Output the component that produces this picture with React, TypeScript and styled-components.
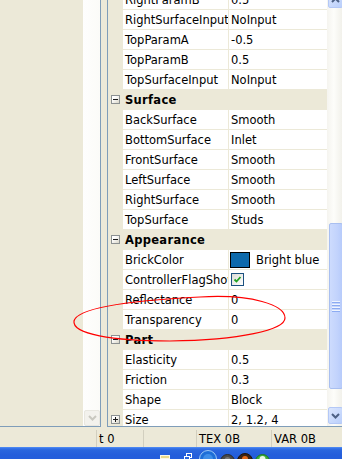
import React from "react";
import styled, { createGlobalStyle } from "styled-components";

const Global = createGlobalStyle`
  *, *::before, *::after { box-sizing: border-box; }
  html, body { margin: 0; padding: 0; background: #ECE9D8; }
  body { font-family: "DejaVu Sans", Tahoma, sans-serif; }
`;

const Screen = styled.div`
  position: relative;
  width: 342px;
  height: 459px;
  overflow: hidden;
  background: #ece9d8;
  display: flex;
  flex-direction: column;
  font-family: "DejaVu Sans", Tahoma, sans-serif;
  font-size: 11.5px;
  letter-spacing: 0;
  color: #000;
`;

const Workspace = styled.div`
  display: flex;
  height: 427px;
  flex: none;
`;

const LeftPanel = styled.div`
  display: flex;
  width: 101px;
  height: 427px;
  flex: none;
  border-right: 1px solid #7f9db9;
  border-bottom: 1px solid #7f9db9;
`;

const LeftBlank = styled.div`
  flex: 1;
  background: #ece9d8;
`;

const DisabledScroll = styled.div`
  width: 17px;
  flex: none;
  background: linear-gradient(to right, #fefefd, #fbfbf8);
  display: flex;
  flex-direction: column;
  justify-content: flex-end;
  padding: 0 0 0 1px;
`;

const DisabledButton = styled.div`
  width: 16px;
  height: 16px;
  border: 1px solid #e8e7e0;
  border-radius: 2px;
  background: #f3f2ed;
  display: flex;
  align-items: center;
  justify-content: center;
`;

const Splitter = styled.div`
  width: 6px;
  flex: none;
  background: #ece9d8;
`;

const GridPanel = styled.div`
  display: flex;
  width: 239px;
  height: 427px;
  flex: none;
  border-left: 1px solid #7f9db9;
  border-bottom: 1px solid #7f9db9;
  border-right: 1px solid #7f9db9;
`;

const RowsArea = styled.div`
  width: 219px;
  flex: none;
  height: 426px;
  overflow: hidden;
  background: #fff;
`;

const RowList = styled.div`
  margin-top: -10px;
  display: flex;
  flex-direction: column;
`;

const Row = styled.div<{ $category?: boolean }>`
  display: flex;
  height: 20px;
  flex: none;
  border-bottom: 1px solid #ece9d8;
  background: ${(p) => (p.$category ? "#ece9d8" : "#fff")};
  line-height: 20px;
`;

const Gutter = styled.div`
  width: 15px;
  flex: none;
  background: #ece9d8;
  display: flex;
  align-items: center;
  padding-left: 3px;
`;

const Toggle = styled.div`
  width: 9px;
  height: 9px;
  border: 1px solid #8c9192;
  background: linear-gradient(to bottom right, #ffffff 30%, #d9d6c8);
  position: relative;
  &::before {
    content: "";
    position: absolute;
    left: 1px;
    top: 3px;
    width: 5px;
    height: 1px;
    background: #1a1a1a;
  }
`;

const PlusToggle = styled(Toggle)`
  &::after {
    content: "";
    position: absolute;
    left: 3px;
    top: 1px;
    width: 1px;
    height: 5px;
    background: #1a1a1a;
  }
`;

const NameCell = styled.div`
  width: 106px;
  flex: none;
  border-right: 1px solid #ece9d8;
  padding-left: 2px;
  overflow: hidden;
  white-space: nowrap;
`;

const CategoryLabel = styled.div`
  flex: 1;
  padding-left: 2px;
  font-weight: bold;
  letter-spacing: 0.3px;
  white-space: nowrap;
`;

const ValueCell = styled.div`
  flex: 1;
  padding-left: 2px;
  display: flex;
  align-items: center;
  white-space: nowrap;
  overflow: hidden;
`;

const Swatch = styled.div<{ $color: string }>`
  width: 20px;
  height: 16px;
  margin-left: -1px;
  margin-right: 6px;
  border: 1px solid #000;
  background: ${(p) => p.$color};
  flex: none;
`;

const CheckBox = styled.div`
  width: 13px;
  height: 13px;
  border: 1px solid #1c5180;
  background: linear-gradient(to bottom right, #dcdcd7, #ffffff);
  display: flex;
  align-items: center;
  justify-content: center;
`;

const ScrollBar = styled.div`
  width: 17px;
  flex: none;
  height: 426px;
  background: linear-gradient(to right, #f5f4ef, #fdfdfa 40%, #efeee7);
  display: flex;
  flex-direction: column;
`;

const ScrollButton = styled.div<{ $up?: boolean }>`
  height: 17px;
  flex: none;
  margin: ${(p) => (p.$up ? "-9px 1px 1px 1px" : "0 1px 2px 1px")};
  border: 1px solid #b4c8f6;
  border-radius: 2px;
  background: linear-gradient(to bottom right, #dbe6fe, #bacffb);
  display: flex;
  align-items: center;
  justify-content: center;
`;

const Track = styled.div<{ $grow?: boolean }>`
  flex: ${(p) => (p.$grow ? "1" : "none")};
  height: ${(p) => (p.$grow ? "auto" : "214px")};
`;

const Thumb = styled.div`
  height: 166px;
  flex: none;
  margin: 0 1px 0 2px;
  border: 1px solid #a9bff0;
  border-radius: 2px;
  background: linear-gradient(to right, #cddbfd, #c2d3fc 60%, #b7cbfb);
  display: flex;
  align-items: center;
  justify-content: center;
`;

const Grip = styled.div`
  width: 8px;
  display: flex;
  flex-direction: column;
  gap: 1px;
  margin-left: -1px;
`;

const GripLine = styled.div`
  height: 1px;
  background: #eef4fe;
  box-shadow: 0 1px 0 #8cabf2;
  margin-bottom: 1px;
`;

const StatusBar = styled.div`
  height: 20px;
  flex: none;
  display: flex;
  padding-top: 3px;
  background: #ece9d8;
`;

const StatusPanel = styled.div<{ $w: number; $first?: boolean }>`
  width: ${(p) => p.$w}px;
  flex: none;
  border-left: ${(p) => (p.$first ? "none" : "1px solid #d2cfbf")};
  padding: 1px 0 0 2px;
  line-height: 17px;
  white-space: nowrap;
`;

const Taskbar = styled.div`
  height: 12px;
  flex: none;
  overflow: hidden;
  background: linear-gradient(#5a94f5 0, #3a78ec 1px, #2a66de 3px, #245edb 8px);
  display: flex;
  align-items: flex-start;
`;

const TrayIcon = styled.svg<{ $ml: number; $mt: number }>`
  flex: none;
  margin-left: ${(p) => p.$ml}px;
  margin-top: ${(p) => p.$mt}px;
`;

const Annotation = styled.svg`
  position: absolute;
  left: 0;
  top: 0;
  pointer-events: none;
`;

type Prop = { name: string; value: string };

const Chevron = ({ up }: { up?: boolean }) => (
  <svg width="9" height="6" viewBox="0 0 9 6">
    <path
      d={up ? "M1 5 L4.5 1.5 L8 5" : "M1 1 L4.5 4.5 L8 1"}
      fill="none"
      stroke="#4d6185"
      strokeWidth="2"
    />
  </svg>
);

const PropRow = ({ name, value }: Prop) => (
  <Row>
    <Gutter />
    <NameCell>{name}</NameCell>
    <ValueCell>{value}</ValueCell>
  </Row>
);

const CategoryRow = ({ label }: { label: string }) => (
  <Row $category>
    <Gutter>
      <Toggle />
    </Gutter>
    <CategoryLabel>{label}</CategoryLabel>
  </Row>
);

export default function App() {
  return (
    <>
      <Global />
      <Screen>
        <Workspace>
          <LeftPanel>
            <LeftBlank />
            <DisabledScroll>
              <DisabledButton>
                <svg width="9" height="6" viewBox="0 0 9 6">
                  <path d="M1 1 L4.5 4.5 L8 1" fill="none" stroke="#c9c8c0" strokeWidth="2" />
                </svg>
              </DisabledButton>
            </DisabledScroll>
          </LeftPanel>
          <Splitter />
          <GridPanel>
            <RowsArea>
              <RowList>
                <PropRow name="RightParamB" value="0.5" />
                <PropRow name="RightSurfaceInput" value="NoInput" />
                <PropRow name="TopParamA" value="-0.5" />
                <PropRow name="TopParamB" value="0.5" />
                <PropRow name="TopSurfaceInput" value="NoInput" />
                <CategoryRow label="Surface" />
                <PropRow name="BackSurface" value="Smooth" />
                <PropRow name="BottomSurface" value="Inlet" />
                <PropRow name="FrontSurface" value="Smooth" />
                <PropRow name="LeftSurface" value="Smooth" />
                <PropRow name="RightSurface" value="Smooth" />
                <PropRow name="TopSurface" value="Studs" />
                <CategoryRow label="Appearance" />
                <Row>
                  <Gutter />
                  <NameCell>BrickColor</NameCell>
                  <ValueCell>
                    <Swatch $color="#0d69ac" />
                    Bright blue
                  </ValueCell>
                </Row>
                <Row>
                  <Gutter />
                  <NameCell>ControllerFlagShown</NameCell>
                  <ValueCell>
                    <CheckBox>
                      <svg width="9" height="9" viewBox="0 0 9 9">
                        <path d="M1.5 4.5 L3.5 6.5 L7.5 2" fill="none" stroke="#21a121" strokeWidth="1.8" />
                      </svg>
                    </CheckBox>
                  </ValueCell>
                </Row>
                <PropRow name="Reflectance" value="0" />
                <PropRow name="Transparency" value="0" />
                <CategoryRow label="Part" />
                <PropRow name="Elasticity" value="0.5" />
                <PropRow name="Friction" value="0.3" />
                <PropRow name="Shape" value="Block" />
                <Row>
                  <Gutter>
                    <PlusToggle />
                  </Gutter>
                  <NameCell>Size</NameCell>
                  <ValueCell>2, 1.2, 4</ValueCell>
                </Row>
              </RowList>
            </RowsArea>
            <ScrollBar>
              <ScrollButton $up>
                <Chevron up />
              </ScrollButton>
              <Track />
              <Thumb>
                <Grip>
                  <GripLine />
                  <GripLine />
                  <GripLine />
                  <GripLine />
                </Grip>
              </Thumb>
              <Track $grow />
              <ScrollButton>
                <Chevron />
              </ScrollButton>
            </ScrollBar>
          </GridPanel>
        </Workspace>
        <StatusBar>
          <StatusPanel $w={96} $first />
          <StatusPanel $w={47}>t 0</StatusPanel>
          <StatusPanel $w={53} />
          <StatusPanel $w={75}>TEX 0B</StatusPanel>
          <StatusPanel $w={80}>VAR 0B</StatusPanel>
        </StatusBar>
        <Taskbar>
          <TrayIcon $ml={160} $mt={8} width="10" height="6" viewBox="0 0 10 6">
            <rect x="0" y="0" width="10" height="6" fill="#fbf7e4" />
            <rect x="1" y="1" width="8" height="2" fill="#e9d98a" />
          </TrayIcon>
          <TrayIcon $ml={14} $mt={6} width="8" height="8" viewBox="0 0 8 8">
            <rect x="2.5" y="0.5" width="5" height="4" fill="none" stroke="#fff" />
            <rect x="0.5" y="3.5" width="5" height="4" fill="#2a66de" stroke="#fff" />
          </TrayIcon>
          <TrayIcon $ml={7} $mt={3} width="18" height="18" viewBox="0 0 18 18">
            <circle cx="9" cy="9" r="8.5" fill="#1e6fd8" stroke="#9cc8f5" />
            <circle cx="9" cy="9" r="5" fill="#3f8ee8" />
          </TrayIcon>
          <TrayIcon $ml={3} $mt={7} width="15" height="15" viewBox="0 0 15 15">
            <circle cx="7.5" cy="7.5" r="7" fill="#4a4a4a" stroke="#2a2a2a" />
            <circle cx="7.5" cy="6" r="3" fill="#777" />
          </TrayIcon>
          <TrayIcon $ml={2} $mt={6} width="16" height="16" viewBox="0 0 16 16">
            <circle cx="8" cy="8" r="7.5" fill="#3b2416" stroke="#1e120b" />
            <circle cx="8" cy="6" r="3" fill="#e36a1c" />
          </TrayIcon>
          <TrayIcon $ml={2} $mt={7} width="15" height="15" viewBox="0 0 15 15">
            <circle cx="7.5" cy="7.5" r="7" fill="#3fae3a" stroke="#1f7a1f" />
            <circle cx="7.5" cy="5" r="3" fill="#e8f6e4" />
          </TrayIcon>
        </Taskbar>
        <Annotation width="342" height="459" viewBox="0 0 342 459">
          <path
            d="M74 321 C78 306 140 300 200 297 C252 294 285 305 285 318 C285 330 240 340 170 341 C112 341 72 334 74 321 Z"
            fill="none"
            stroke="#ff0000"
            strokeWidth="1.2"
          />
        </Annotation>
      </Screen>
    </>
  );
}
